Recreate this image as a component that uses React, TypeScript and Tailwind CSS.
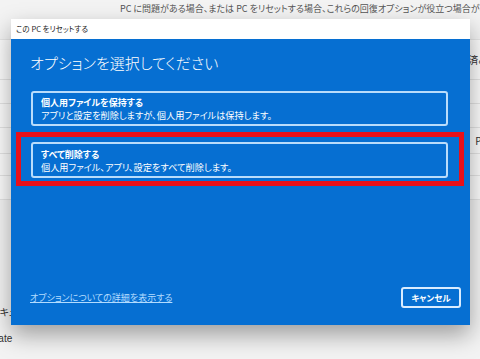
import React from "react";

const jp = "[font-family:'Noto_Sans_CJK_JP','Noto_Sans',sans-serif] [font-feature-settings:'palt']";

function BgRow({ left, right, h }: { left?: string; right?: string; h: string }) {
  return (
    <div className={`flex items-center justify-between border-b border-[#e3e3e3] bg-[#fbfbfb] ${h}`}>
      <span className="-ml-[30px] text-[10px] text-[#333]">{left}</span>
      <span className="-mr-[8px] text-[10px] text-[#333]">{right}</span>
    </div>
  );
}

export default function App() {
  return (
    <div className={`relative w-[480px] h-[359px] overflow-hidden bg-[#f3f3f3] ${jp}`}>
      {/* background settings page */}
      <div className="flex flex-col">
        <div className="h-[40px] pl-[120px] pt-[2px] text-[9px] leading-[13px] text-[#555] whitespace-nowrap border-b border-[#e6e6e6]">
          PC に問題がある場合、または PC をリセットする場合、これらの回復オプションが役立つ場合があります。
        </div>
        <BgRow h="h-[40px]" right="済み" />
        <BgRow h="h-[24px]" left="デバイ" />
        <BgRow h="h-[24px]" left="モンタ" />
        <BgRow h="h-[26px]" right="PC" />
        <BgRow h="h-[22px]" />
        <BgRow h="h-[24px]" />
        <div className="h-[100px]" />
        <div className="h-[22px] flex items-center -ml-[10px] text-[10px] text-[#333]">セキュ</div>
        <div className="h-[32px] flex items-center -ml-[20px] text-[10px] text-[#333] [font-family:'Liberation_Sans',sans-serif]">Update</div>
      </div>

      {/* dialog */}
      <div className="absolute left-[11px] top-[19px] w-[459px] flex flex-col shadow-[0_10px_22px_rgba(0,0,0,0.35)]">
        <div className="h-[20px] bg-white pl-[5px] flex items-center text-[7.5px] text-[#222]">
          この PC をリセットする
        </div>
        <div className="h-[286px] bg-[#066fd2] flex flex-col pl-[19px] pr-[9px] pt-[14px] pb-[17px]">
          <div className="text-[15px] leading-[20px] text-white font-light">オプションを選択してください</div>
          <div className="mr-[13px] mt-[18px] flex flex-col">
            <div className="ml-[1px] h-[35px] rounded-[3px] border-2 border-[#b9dcfb] flex flex-col justify-center pl-[8px] pt-[1px] text-white">
              <div className="text-[9px] leading-[12px] font-bold">個人用ファイルを保持する</div>
              <div className="text-[9.2px] leading-[12px]">アプリと設定を削除しますが、個人用ファイルは保持します。</div>
            </div>
            <div className="mt-[6px] -ml-[14px] -mr-[16px] border-[5px] border-[#e8101a] pt-[5px] pb-[3px] pl-[10px] pr-[11px]">
              <div className="h-[36px] rounded-[3px] border-2 border-[#b9dcfb] flex flex-col justify-center pl-[8px] pt-[1px] text-white">
                <div className="text-[9px] leading-[12px] font-bold">すべて削除する</div>
                <div className="text-[9.2px] leading-[12px]">個人用ファイル、アプリ、設定をすべて削除します。</div>
              </div>
            </div>
          </div>
          <div className="mt-auto flex items-center justify-between">
            <a className="text-[9px] leading-[13px] text-[#b3dcff] underline">オプションについての詳細を表示する</a>
            <div className="w-[60px] h-[21px] rounded-[3px] border-2 border-[#d9ecff] flex items-center justify-center text-[8.5px] font-bold text-white">
              キャンセル
            </div>
          </div>
        </div>
      </div>
    </div>
  );
}
